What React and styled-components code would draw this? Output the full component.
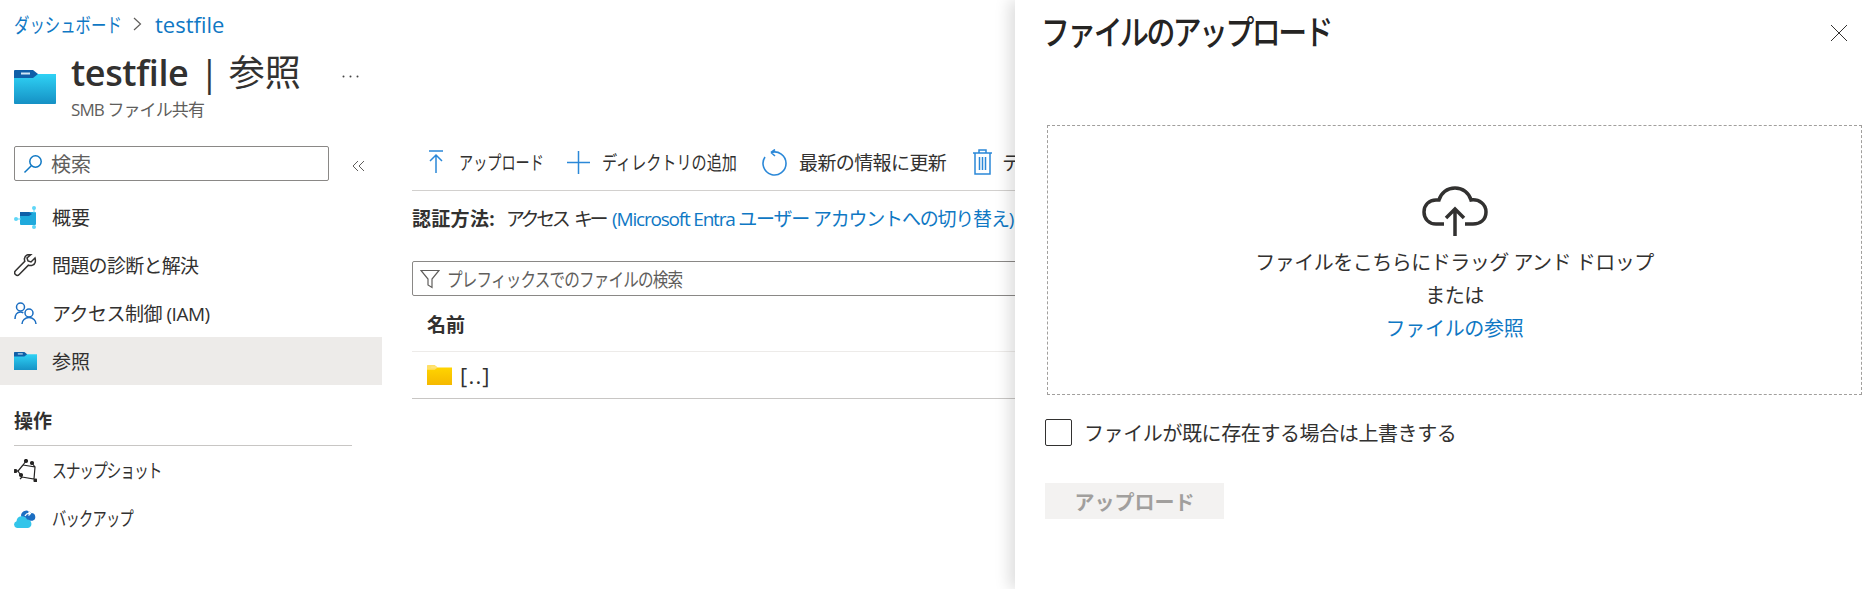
import React from "react";
import styled, { createGlobalStyle } from "styled-components";

const GlobalStyle = createGlobalStyle`
  html, body { margin: 0; padding: 0; background: #fff; }
  body {
    font-family: "Open Sans", "Noto Sans CJK JP", sans-serif;
    color: #323130;
    overflow: hidden;
  }
`;

const Page = styled.div`
  position: relative;
  width: 1873px;
  height: 589px;
  overflow: hidden;
`;

/* the katakana in the screenshot is set narrower than Noto draws it */
const Narrow = styled.span`
  display: inline-block;
  white-space: nowrap;
  width: ${(p) => p.$w}px;
  transform: scaleX(${(p) => p.$x});
  transform-origin: left center;
  letter-spacing: ${(p) => p.$spacing || "0"};
`;

const Breadcrumb = styled.div`
  display: flex;
  align-items: center;
  height: 24px;
  padding: 12px 0 0 14px;
  font-size: 20px;
  color: #0f78c4;
  svg { margin: 0 13px 0 11px; }
`;

const Crumb = styled.span`
  font-size: 22px;
`;

const Header = styled.div`
  display: flex;
  align-items: flex-start;
  padding: 15px 0 0 14px;
  height: 77px;
`;

const HeaderIcon = styled.div`
  width: 42px;
  margin: 19px 15px 0 0;
  line-height: 0;
`;

const TitleBlock = styled.div`
  display: flex;
  flex-direction: column;
`;

const TitleRow = styled.div`
  display: flex;
  align-items: center;
  height: 44px;
`;

const Title = styled.h1`
  margin: 0;
  font-size: 36px;
  line-height: 44px;
  font-weight: 600;
  letter-spacing: -0.4px;
`;

const TitleSep = styled.span`
  font-weight: 400;
  margin-left: 11px;
`;

const TitlePage = styled.span`
  font-weight: 400;
  margin-left: 10px;
  letter-spacing: 0;
`;

const More = styled.span`
  margin: 4px 0 0 41px;
  line-height: 0;
`;

const Subtitle = styled.div`
  font-size: 17px;
  line-height: 22px;
  color: #605e5c;
  margin-top: 4px;
  letter-spacing: -0.9px;
`;

const Body = styled.div`
  display: flex;
  padding-top: 18px;
`;

const Sidebar = styled.nav`
  width: 382px;
  flex: none;
`;

const SearchRow = styled.div`
  display: flex;
  align-items: center;
  padding-left: 14px;
  margin-bottom: 12px;
`;

const SearchBox = styled.div`
  width: 315px;
  height: 35px;
  box-sizing: border-box;
  border: 1px solid #8a8886;
  border-radius: 2px;
  display: flex;
  align-items: center;
  padding-left: 8px;
  gap: 8px;
  font-size: 20px;
  color: #605e5c;
`;

const Collapse = styled.span`
  margin-left: 23px;
  margin-top: 4px;
  line-height: 0;
`;

const NavRow = styled.div`
  display: flex;
  align-items: center;
  height: 48px;
  padding-left: 14px;
  gap: 15px;
  font-size: 19px;
  letter-spacing: ${(p) => p.$spacing || "0"};
  background: ${(p) => (p.$active ? "#edebe9" : "transparent")};
`;

const NavIcon = styled.span`
  width: 23px;
  height: 23px;
  flex: none;
  line-height: 0;
  display: flex;
  align-items: center;
`;

const NavSection = styled.div`
  margin: 22px 30px 0 14px;
  padding-bottom: 10px;
  border-bottom: 1px solid #c8c6c4;
  font-size: 19px;
  line-height: 28px;
  font-weight: 700;
`;

const Content = styled.main`
  flex: 1;
  padding-left: 30px;
  margin-top: -12px;
`;

const Toolbar = styled.div`
  display: flex;
  align-items: center;
  height: 56px;
  border-bottom: 1px solid #d2d0ce;
  padding-left: 16px;
  white-space: nowrap;
`;

const ToolButton = styled.div`
  display: flex;
  align-items: center;
  gap: ${(p) => p.$gap || "10px"};
  margin-right: ${(p) => p.$after || "20px"};
  font-size: 19px;
  letter-spacing: ${(p) => p.$spacing || "0"};
`;

const AuthLine = styled.div`
  height: 30px;
  margin-top: 13px;
  line-height: 30px;
  font-size: 19px;
  white-space: nowrap;
  letter-spacing: -3.4px;
  word-spacing: 5px;
  b { font-weight: 700; margin-right: 11px; letter-spacing: 0.3px; word-spacing: 0; }
  a { color: #0f78c4; margin-left: 7px; letter-spacing: -1.2px; word-spacing: 0; }
`;

const FilterBox = styled.div`
  margin-top: 27px;
  height: 35px;
  box-sizing: border-box;
  border: 1px solid #8a8886;
  border-radius: 2px;
  display: flex;
  align-items: center;
  padding-left: 7px;
  gap: 7px;
  font-size: 19px;
  color: #605e5c;
`;

const TableHead = styled.div`
  height: 55px;
  display: flex;
  align-items: center;
  padding-left: 15px;
  font-size: 19px;
  font-weight: 700;
  border-bottom: 1px solid #edebe9;
`;

const TableRow = styled.div`
  height: 46px;
  display: flex;
  align-items: center;
  padding-left: 15px;
  gap: 8px;
  font-size: 22px;
  letter-spacing: 1.2px;
  border-bottom: 1px solid #c8c6c4;
`;

const Panel = styled.aside`
  position: absolute;
  top: 0;
  right: 0;
  bottom: 0;
  width: 858px;
  box-sizing: border-box;
  background: #fff;
  box-shadow: -6px 0 14px rgba(0, 0, 0, 0.13);
  padding: 0 11px 0 28px;
`;

const PanelHead = styled.div`
  display: flex;
  justify-content: space-between;
  align-items: center;
  height: 66px;
  padding-right: 14px;
`;

const PanelTitle = styled.h2`
  margin: -6px 0 0 -2px;
  font-size: 34px;
  font-weight: 500;
  color: #252423;
`;

const DropZone = styled.div`
  margin-top: 59px;
  margin-left: 4px;
  height: 270px;
  box-sizing: border-box;
  border: 1px dashed #a19f9d;
  display: flex;
  flex-direction: column;
  align-items: center;
  padding-top: 60px;
  font-size: 20px;
  line-height: 33px;
  letter-spacing: -0.5px;
  svg { margin-bottom: 10px; }
`;

const DropLink = styled.span`
  color: #0f78c4;
  letter-spacing: -0.3px;
`;

const CheckRow = styled.label`
  display: flex;
  align-items: center;
  gap: 12px;
  margin-top: 23px;
  margin-left: 2px;
  font-size: 20px;
  letter-spacing: -0.4px;
`;

const CheckBox = styled.span`
  width: 27px;
  height: 27px;
  box-sizing: border-box;
  border: 1px solid #323130;
  border-radius: 2px;
`;

const UploadButton = styled.button`
  display: block;
  margin: 36px 0 0 2px;
  width: 179px;
  height: 36px;
  border: 0;
  background: #f3f2f1;
  color: #a19f9d;
  font: 700 20px "Open Sans", "Noto Sans CJK JP", sans-serif;
  padding: 0;
`;

const FolderIcon = ({ size = 42, id = "f", top = "#2fd2f5", bottom = "#1590c4", tab = "#0f5fa8", mark = "#cfe6f5", tabWidth = 22 }) => (
  <svg width={size} height={size * 0.81} viewBox="0 0 42 34">
    <defs>
      <linearGradient id={id} x1="0" y1="0" x2="0" y2="1">
        <stop offset="0" stopColor={top} />
        <stop offset="1" stopColor={bottom} />
      </linearGradient>
    </defs>
    <path d="M0 4h42v29a1 1 0 0 1-1 1H1a1 1 0 0 1-1-1z" fill={`url(#${id})`} />
    <path d={`M1 0h${tabWidth - 4}l5 4-5 4H0V1a1 1 0 0 1 1-1z`} fill={tab} />
    <rect x="7" y="2.5" width="9" height="2" fill={mark} />
  </svg>
);

const App = () => (
  <Page>
    <GlobalStyle />
    <Breadcrumb>
      <Narrow $w={108} $x={0.77}>ダッシュボード</Narrow>
      <svg width="9" height="14" viewBox="0 0 9 14"><path d="M1 1l6.5 6L1 13" fill="none" stroke="#605e5c" strokeWidth="1.2" /></svg>
      <Crumb>testfile</Crumb>
    </Breadcrumb>
    <Header>
      <HeaderIcon><FolderIcon id="head" /></HeaderIcon>
      <TitleBlock>
        <TitleRow>
          <Title>testfile<TitleSep>|</TitleSep><TitlePage>参照</TitlePage></Title>
          <More>
            <svg width="17" height="3" viewBox="0 0 17 3" fill="#444">
              <circle cx="1.500" cy="1.500" r="1" />
              <circle cx="8.500" cy="1.500" r="1" />
              <circle cx="15.500" cy="1.500" r="1" />
            </svg>
          </More>
        </TitleRow>
        <Subtitle>SMB ファイル共有</Subtitle>
      </TitleBlock>
    </Header>
    <Body>
      <Sidebar>
        <SearchRow>
          <SearchBox>
            <svg width="20" height="20" viewBox="0 0 20 20" fill="none" stroke="#0f78c4" strokeWidth="1.5">
              <circle cx="12.5" cy="7.5" r="5.7" />
              <path d="M8.3 11.7L1.5 18.5" />
            </svg>
            検索
          </SearchBox>
          <Collapse>
            <svg width="13" height="12" viewBox="0 0 13 12" fill="none" stroke="#605e5c" strokeWidth="1">
              <path d="M6 1L1 6l5 5M12 1L7 6l5 5" />
            </svg>
          </Collapse>
        </SearchRow>
        <NavRow>
          <NavIcon>
            <svg width="23" height="23" viewBox="0 0 23 23">
              <rect x="6" y="6" width="16" height="13" rx="1" fill="#1fa9dc" />
              <path d="M6 6h9l3 2-3 2H6z" fill="#0f5fa8" />
              <circle cx="2" cy="13" r="2" fill="#5fd6f7" />
              <circle cx="20" cy="2" r="2" fill="#5fd6f7" />
              <circle cx="20" cy="21" r="2" fill="#5fd6f7" />
              <path d="M2 13h5M20 2v5" stroke="#5fd6f7" />
            </svg>
          </NavIcon>
          概要
        </NavRow>
        <NavRow $spacing="-0.7px">
          <NavIcon>
            <svg width="23" height="23" viewBox="0 0 23 23" fill="none" stroke="#323130" strokeWidth="1.5">
              <path d="M21 4l-4 4-3-1-1-3 4-3.500c-3-.5-6 1-6.500 4-.2 1 0 2 .3 2.800L1.500 16.800c-1 1-1 2.700 0 3.700s2.700 1 3.700 0l9.200-9.300c3 1 6-.2 6.800-3 .3-1.500.2-3-.2-4.200z" />
            </svg>
          </NavIcon>
          問題の診断と解決
        </NavRow>
        <NavRow $spacing="-0.5px">
          <NavIcon>
            <svg width="23" height="23" viewBox="0 0 23 23" fill="none" stroke="#1b6ec2" strokeWidth="1.5">
              <circle cx="6.500" cy="5" r="4" />
              <path d="M1 17c0-4 2-7 5.500-7 1 0 2 .3 2.800.8" />
              <circle cx="15" cy="11" r="4" />
              <path d="M8 22c0-3.500 3-6.500 7-6.500s7 3 7 6.500" />
            </svg>
          </NavIcon>
          アクセス制御 (IAM)
        </NavRow>
        <NavRow $active>
          <NavIcon><FolderIcon id="nav" size={23} /></NavIcon>
          参照
        </NavRow>
        <NavSection>操作</NavSection>
        <NavRow>
          <NavIcon>
            <svg width="23" height="23" viewBox="0 0 23 23" fill="none" stroke="#252423" strokeWidth="1.2">
              <path d="M9 6l12 2-1 12-12-2M9 6L4 12l4 6M9 6l3-4M21 8l-3-4M4 12H1M8 18l-2 2M20 20l2 2" />
              <circle cx="12" cy="2" r="1.500" fill="#252423" />
              <circle cx="1.500" cy="12" r="1.500" fill="#252423" />
              <circle cx="7" cy="16" r="1.500" fill="#252423" />
              <circle cx="18" cy="4" r="1.500" fill="#252423" />
              <circle cx="21.500" cy="21.500" r="1.500" fill="#252423" />
            </svg>
          </NavIcon>
          <Narrow $w={109} $x={0.78} $spacing="-1.5px">スナップショット</Narrow>
        </NavRow>
        <NavRow>
          <NavIcon>
            <svg width="23" height="20" viewBox="0 0 23 20">
              <path d="M7 7a5.500 5.500 0 0 1 10-2 4 4 0 0 1 1.500 7.800H8z" fill="#1b6ec2" />
              <path d="M3 20a3.500 3.500 0 0 1-.5-6.800A5.500 5.500 0 0 1 13 11.500a4.300 4.300 0 0 1 1 8.500z" fill="#33c5ea" />
              <path d="M11 8c1-2 3-3 5-2.500M14.500 3.500l2 2-2 2" stroke="#fff" strokeWidth="1.300" fill="none" />
            </svg>
          </NavIcon>
          <Narrow $w={81} $x={0.75} $spacing="-1px">バックアップ</Narrow>
        </NavRow>
      </Sidebar>
      <Content>
        <Toolbar>
          <ToolButton $gap="15px" $after="23px">
            <svg width="16" height="24" viewBox="0 0 16 24" fill="none" stroke="#2b88d8" strokeWidth="1.500">
              <path d="M1 1h14M8 23V5M2 11l6-6 6 6" />
            </svg>
            <Narrow $w={85} $x={0.745}>アップロード</Narrow>
          </ToolButton>
          <ToolButton $gap="12px" $after="23px">
            <svg width="23" height="23" viewBox="0 0 23 23" fill="none" stroke="#2b88d8" strokeWidth="1.500">
              <path d="M11.500 0v23M0 11.500h23" />
            </svg>
            <Narrow $w={137} $x={0.795}>ディレクトリの追加</Narrow>
          </ToolButton>
          <ToolButton $spacing="-0.6px" $gap="11px" $after="27px">
            <svg width="26" height="27" viewBox="0 0 26 27" fill="none" stroke="#2b88d8" strokeWidth="1.600">
              <path d="M9 3.500a11.500 11.500 0 1 1-6 4.500M9 3.500l4-3M9 3.500l4 3.500" />
            </svg>
            最新の情報に更新
          </ToolButton>
          <ToolButton $gap="10px">
            <svg width="19" height="26" viewBox="0 0 19 26" fill="none" stroke="#2b88d8" strokeWidth="1.500">
              <path d="M0 4h19M6 4V1h7v3M2 4v21h15V4M6.500 8v13M9.500 8v13M12.500 8v13" />
            </svg>
            ディレクトリの削除
          </ToolButton>
        </Toolbar>
        <AuthLine>
          <b>認証方法:</b>アクセス キー<a>(Microsoft Entra ユーザー アカウントへの切り替え)</a>
        </AuthLine>
        <FilterBox>
          <svg width="20" height="20" viewBox="0 0 20 20" fill="none" stroke="#605e5c" strokeWidth="1.200">
            <path d="M1 1.500h18L12 10v8.500l-4-2.500v-6z" />
          </svg>
          <Narrow $w={236} $x={0.82} $spacing="-1px">プレフィックスでのファイルの検索</Narrow>
        </FilterBox>
        <TableHead>名前</TableHead>
        <TableRow>
          <FolderIcon id="row" size={25} top="#ffd400" bottom="#f5b800" tab="#ffdf66" mark="#ffe680" tabWidth={16} />
          [..]
        </TableRow>
      </Content>
    </Body>
    <Panel>
      <PanelHead>
        <PanelTitle><Narrow $w={289} $x={0.85} $spacing="-3px">ファイルのアップロード</Narrow></PanelTitle>
        <svg width="18" height="18" viewBox="0 0 18 18" fill="none" stroke="#323130" strokeWidth="1">
          <path d="M1 1l16 16M17 1L1 17" />
        </svg>
      </PanelHead>
      <DropZone>
        <svg width="66" height="50" viewBox="0 0 66 50" fill="none" stroke="#323130" strokeWidth="3.500">
          <path d="M22 38H14C7 38 2 33 2 26s5-12 12-12h3C19 7 25 2 33 2c8 0 14 5 16 12 8-1 15 4 15 12s-6 12-13 12h-8" />
          <path d="M33 50V23M24 32l9-9 9 9" />
        </svg>
        <span>ファイルをこちらにドラッグ アンド ドロップ</span>
        <span>または</span>
        <DropLink>ファイルの参照</DropLink>
      </DropZone>
      <CheckRow>
        <CheckBox />
        ファイルが既に存在する場合は上書きする
      </CheckRow>
      <UploadButton>アップロード</UploadButton>
    </Panel>
  </Page>
);

export default App;
